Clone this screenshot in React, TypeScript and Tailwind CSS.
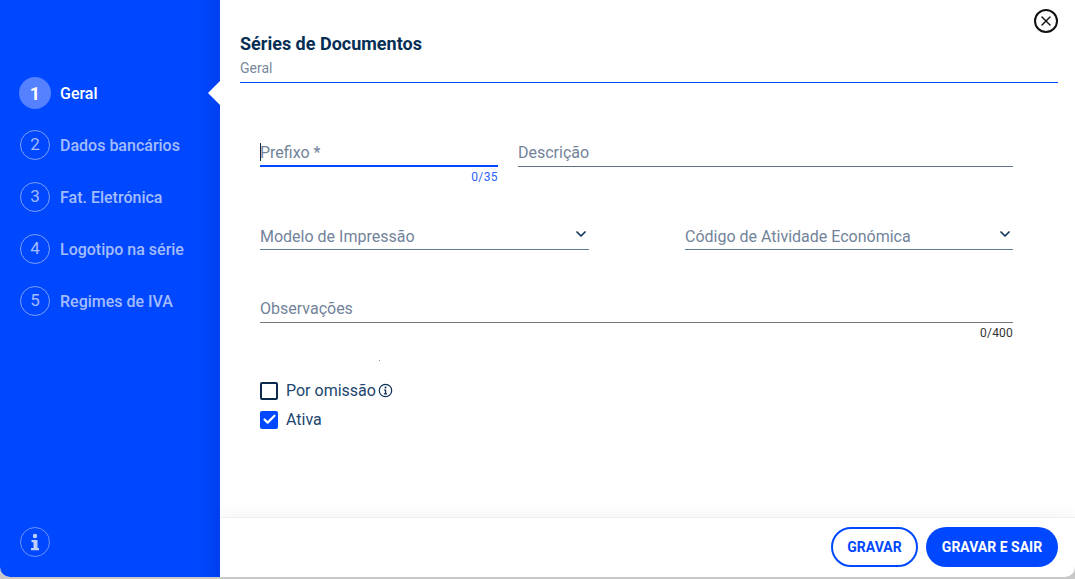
import { ChevronDown, Check, X } from 'lucide-react';

const steps = ['Geral', 'Dados bancários', 'Fat. Eletrónica', 'Logotipo na série', 'Regimes de IVA'];

function Field({ label, className, line, counter, counterClass, chevron }: { label: string; className: string; line: string; counter?: string; counterClass?: string; chevron?: boolean }) {
  return (
    <div className={className}>
      <div className={`flex h-[30px] items-center justify-between ${line}`}>
        <span className="text-[16px] text-[#72839a]">{label}</span>
        {chevron && <ChevronDown size={16} strokeWidth={2.5} className="-mt-[5px] text-[#0b3158]" />}
      </div>
      {counter && <div className={`text-right text-[12px] leading-[14px] ${counterClass}`}>{counter}</div>}
    </div>
  );
}

export default function App() {
  return (
    <div className="h-[579px] w-[1075px] overflow-hidden bg-[#c8c8c8] font-['Roboto',sans-serif]">
      <div className="flex h-[577px] overflow-hidden rounded-b-[10px] bg-white">
        {/* Left Sidebar */}
        <div className="relative flex w-[220px] shrink-0 flex-col justify-between bg-[linear-gradient(90deg,#0048ff_0%,#0048ff_90%,#003ff0_100%)] pb-[20px] pl-[19px] pt-[77px]">
          <ul className="flex flex-col gap-[20px]">
            {steps.map((step, i) => (
              <li key={step} className={`flex h-[32px] items-center gap-[9px] text-[16px] font-medium ${i === 0 ? 'text-white' : 'text-[#a3bcff]'}`}>
                {i === 0 ? (
                  <span className="flex h-[32px] w-[32px] items-center justify-center rounded-full bg-[#5580ff] text-[18px] font-bold">1</span>
                ) : (
                  <span className="mx-[1px] flex h-[30px] w-[30px] items-center justify-center rounded-full border border-[#7c9dff] text-[17px] font-normal">{i + 1}</span>
                )}
                <span className="pt-[2px]">{step}</span>
              </li>
            ))}
          </ul>
          <div className="ml-[1px] flex h-[30px] w-[30px] items-center justify-center rounded-full border border-[#6f93ff]">
            <svg width="10" height="18" viewBox="0 0 10 18" fill="#bfd0ff">
              <circle cx="5" cy="3" r="2.2" />
              <path d="M1.5 7h6v8h1.5v2.2H1v-2.2h2.5V9.2h-2z" />
            </svg>
          </div>
          {/* selected step pointer */}
          <div className="absolute left-[208px] top-[81px] h-0 w-0 border-y-[12px] border-r-[12px] border-y-transparent border-r-white" />
        </div>

        {/* Right Content */}
        <div className="relative flex min-w-0 flex-1 flex-col">
          <button className="absolute right-[17px] top-[9px] flex h-[24px] w-[24px] items-center justify-center rounded-full border-2 border-[#111] text-[#111]">
            <X size={16} strokeWidth={2.25} />
          </button>
          <div className="flex-1 pl-[20px] pr-[17px] pt-[33px]">
            <div className="pb-[6px]">
              <h1 className="text-[18px] font-bold leading-[21px] text-[#062e55]">Séries de Documentos</h1>
              <p className="mt-[6px] text-[14px] leading-[16px] text-[#7a8a9c]">Geral</p>
            </div>
            <div className="h-px bg-[#0048ff]" />
            <div className="pl-[20px] pr-[45px] pt-[54px]">
              <div className="flex gap-[20px]">
                <div className="relative w-[238px]">
                  <div className="absolute left-0 top-[6px] h-[18px] w-px bg-[#0b2a4e]" />
                  <Field label="Prefixo *" className="" line="border-b-2 border-[#0048ff] pt-[4px]" counter="0/35" counterClass="mt-[3px] tracking-[0.4px] text-[#2a62ff]" />
                </div>
                <Field label="Descrição" className="flex-1" line="border-b border-[#5f7288] pt-[2px]" />
              </div>
              <div className="mt-[36px] flex justify-between">
                <Field label="Modelo de Impressão" className="w-[329px]" line="border-b border-[#5f7a9a] pt-[4px]" chevron />
                <Field label="Código de Atividade Económica" className="w-[328px]" line="border-b border-[#5f7a9a] pt-[4px]" chevron />
              </div>
              <Field label="Observações" className="mt-[43px]" line="border-b border-[#777] pt-[3px]" counter="0/400" counterClass="mt-[3px] tracking-[0.2px] text-[#333]" />
              <div className="ml-[119px] mt-[20px] h-px w-px bg-[#999]" />
              <div className="mt-[20px] flex flex-col gap-[10px] text-[16px] leading-[19px] text-[#21456e]">
                <label className="flex items-center">
                  <span className="mr-[8px] h-[18px] w-[18px] rounded-[2px] border-2 border-[#0b2a4e]" />
                  Por omissão
                  <svg width="15" height="15" viewBox="0 0 15 15" fill="none" className="ml-[2px] text-[#0b3158]">
                    <circle cx="7.5" cy="7.5" r="6.2" stroke="currentColor" strokeWidth="1.2" />
                    <circle cx="7.5" cy="4.6" r="1" fill="currentColor" />
                    <path d="M6 6.5h2.2v3.8h0.9v1.1H5.9v-1.1h1V7.6H6z" fill="currentColor" />
                  </svg>
                </label>
                <label className="flex items-center">
                  <span className="mr-[8px] flex h-[18px] w-[18px] items-center justify-center rounded-[2px] bg-[#0048ff] text-white">
                    <Check size={15} strokeWidth={3.5} />
                  </span>
                  Ativa
                </label>
              </div>
            </div>
          </div>
          {/* Footer */}
          <div className="flex h-[60px] shrink-0 items-start justify-end gap-[8px] border-t border-[#f0f0f0] pr-[17px] pt-[9px] shadow-[0_-6px_10px_rgba(0,0,0,0.03)]">
            <button className="h-[40px] w-[87px] rounded-full border-2 border-[#0048ff] text-[14px] font-bold text-[#0048ff]">GRAVAR</button>
            <button className="h-[40px] w-[132px] rounded-full bg-[#0048ff] text-[14px] font-bold text-white">GRAVAR E SAIR</button>
          </div>
        </div>
      </div>
    </div>
  );
}
